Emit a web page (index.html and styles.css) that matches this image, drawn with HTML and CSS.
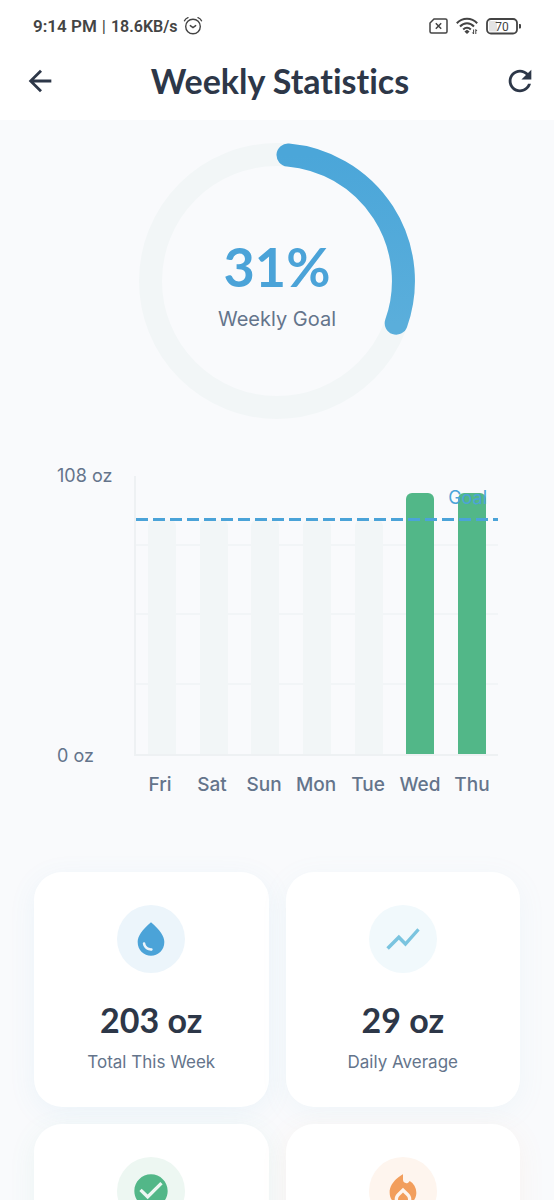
FILE: index.html
```html
<!DOCTYPE html>
<html lang="en">
<head>
<meta charset="utf-8">
<meta name="viewport" content="width=device-width, initial-scale=1">
<title>Weekly Statistics</title>
<link rel="stylesheet" href="styles.css">
</head>
<body>
<div class="app">
  <header class="top">
    <div class="status">
      <div class="status-left">
        <span class="time">9:14 PM</span><span class="divider">|</span><span class="speed">18.6KB/s</span>
        <svg class="alarm" width="20" height="20" viewBox="0 0 20 20" fill="none" stroke="#444" stroke-width="1.4" stroke-linecap="round"><circle cx="10" cy="10.500" r="7.300"/><path d="M1.500 4.800C2.200 3.200 3.400 2.200 5 1.600M18.500 4.800C17.800 3.200 16.600 2.200 15 1.600M7.300 9.600l2.700 2 2.700-2"/></svg>
      </div>
      <div class="status-right">
        <svg width="19" height="16" viewBox="0 0 19 16" fill="none" stroke="#444" stroke-width="1.500"><path d="M5 1h11.500q1.500 0 1.500 1.500v11q0 1.500-1.500 1.500H2.500Q1 15 1 13.500V5z"/><path d="M6.800 5.300l5.400 5.400M12.200 5.300l-5.400 5.400"/></svg>
        <svg width="22" height="18" viewBox="0 0 22 18" fill="none" stroke="#444" stroke-width="2"><path d="M.8 6.200C6.500.2 15.500.2 21.200 6.200M4 9.500c4-4.300 10-4.300 14 0M7.200 12.500c2.300-2.300 5.300-2.300 7.600 0"/><path d="M11 12.800l2.600 1.600-2.600 2.600-2.600-2.600z" fill="#444" stroke="none"/><path d="M17.600 12.500v4.500l-1.200-1.500M19.800 17v-4.500l1.200 1.500" stroke-width="1"/></svg>
        <svg width="36" height="17" viewBox="0 0 36 17"><rect x="3" y="3" width="8" height="10.500" fill="#e3e3e3"/><rect x="1" y="1" width="30" height="14.500" rx="4" fill="none" stroke="#444" stroke-width="1.800"/><path d="M33 6h1q1 0 1 1v2.500q0 1-1 1h-1z" fill="#444"/><text class="battery-text" x="16" y="12.500" text-anchor="middle">70</text></svg>
      </div>
    </div>
    <div class="appbar">
      <button class="icon-button" aria-label="Back"><svg viewBox="0 0 24 24"><path d="M20 11H7.830l5.590-5.590L12 4l-8 8 8 8 1.410-1.410L7.830 13H20v-2z"/></svg></button>
      <h1 class="title">Weekly Statistics</h1>
      <button class="icon-button" aria-label="Refresh"><svg viewBox="0 0 24 24"><path d="M17.650 6.350C16.200 4.900 14.210 4 12 4c-4.420 0-7.990 3.580-7.990 8s3.570 8 7.990 8c3.730 0 6.840-2.550 7.730-6h-2.080c-.82 2.330-3.040 4-5.650 4-3.310 0-6-2.690-6-6s2.690-6 6-6c1.660 0 3.140.69 4.220 1.780L13 11h7V4l-2.350 2.350z"/></svg></button>
    </div>
  </header>

  <main class="content">
    <section class="goal">
      <svg class="ring" viewBox="0 0 276 276" fill="none" stroke-width="23">
        <defs><linearGradient id="arc" x1="0" y1="0" x2="0" y2="1"><stop offset="0" stop-color="#4ba6d9"/><stop offset="1" stop-color="#5aaedb"/></linearGradient></defs>
        <circle cx="138" cy="138" r="126.500" stroke="#f2f6f7"/>
        <path d="M149 12A126.500 126.500 0 0 1 257.200 180.200" stroke="url(#arc)" stroke-linecap="round"/>
      </svg>
      <div class="goal-text">
        <strong class="percent">31%</strong>
        <span class="goal-label">Weekly Goal</span>
      </div>
    </section>

    <section class="chart">
      <div class="scale"><span>108 oz</span><span>0 oz</span></div>
      <div class="plot">
        <div class="grid-lines"><i></i><i></i><i></i><i></i></div>
        <div class="bars">
          <div class="bar"></div><div class="bar"></div><div class="bar"></div><div class="bar"></div><div class="bar"></div>
          <div class="bar met"></div><div class="bar met"></div>
        </div>
        <div class="goal-line"><span class="goal-tag">Goal</span></div>
      </div>
      <div class="days"><span>Fri</span><span>Sat</span><span>Sun</span><span>Mon</span><span>Tue</span><span>Wed</span><span>Thu</span></div>
    </section>

    <section class="cards">
      <article class="card blue">
        <div class="badge"><svg viewBox="0 0 24 24"><path d="M12 2c-5.330 4.550-8 8.480-8 11.800 0 4.980 3.800 8.200 8 8.200s8-3.220 8-8.200c0-3.320-2.670-7.250-8-11.800zM7.830 14c.37 0 .67.26.74.62.41 2.220 2.280 2.980 3.640 2.870.43-.02.79.32.79.75 0 .4-.32.73-.72.75-2.130.13-4.620-1.090-5.190-4.120-.08-.45.28-.87.74-.87z"/></svg></div>
        <strong class="value">203 oz</strong>
        <span class="label">Total This Week</span>
      </article>
      <article class="card cyan">
        <div class="badge"><svg viewBox="0 0 24 24"><path d="M3.500 18.490l6-6.010 4 4L22 6.920l-1.410-1.410-7.090 7.970-4-4L2 16.990z"/></svg></div>
        <strong class="value">29 oz</strong>
        <span class="label">Daily Average</span>
      </article>
      <article class="card green">
        <div class="badge"><svg viewBox="0 0 24 24"><path d="M12 2C6.480 2 2 6.480 2 12s4.480 10 10 10 10-4.480 10-10S17.520 2 12 2zm-2 15l-5-5 1.410-1.410L10 14.170l7.590-7.590L19 8l-9 9z"/></svg></div>
      </article>
      <article class="card orange">
        <div class="badge"><svg viewBox="0 0 24 24"><path d="M12 12.900l-2.130 2.090C9.310 15.550 9 16.280 9 17.060 9 18.680 10.350 20 12 20s3-1.320 3-2.940c0-.78-.31-1.520-.87-2.070L12 12.900z"/><path d="M16 6l-.44.55C14.380 8.020 12 7.190 12 5.300V2S4 6 4 13c0 2.920 1.560 5.470 3.890 6.860-.56-.79-.89-1.760-.89-2.800 0-1.320.52-2.560 1.470-3.500L12 10.100l3.530 3.470c.95.93 1.470 2.170 1.470 3.500 0 1.020-.31 1.960-.85 2.750 1.890-1.150 3.290-3.060 3.710-5.300.66-3.550-1.070-6.900-3.860-8.520z"/></svg></div>
      </article>
    </section>
  </main>
</div>
</body>
</html>
```
FILE: styles.css
```css
* { box-sizing: border-box; }

body {
  margin: 0;
  background: #f9fafc;
  color: #2d3748;
  font-family: "Inter", sans-serif;
}

.app {
  display: flex;
  flex-direction: column;
  height: 100vh;
}

.top { background: #fff; }

/* Status bar */
.status {
  display: flex;
  justify-content: space-between;
  align-items: center;
  height: 42px;
  padding: 10px 32px 0 33px;
  color: #444;
  font-family: Roboto, sans-serif;
  font-size: 17px;
  font-weight: 600;
}

.status-left, .status-right { display: flex; align-items: center; }
.status-left { gap: 5px; }
.status-right { gap: 8px; }
.speed { font-size: 16px; }
.divider { font-weight: 400; }
.battery-text { font-size: 12px; font-weight: 400; fill: #444; }

/* App bar */
.appbar {
  display: flex;
  justify-content: space-between;
  align-items: center;
  height: 78px;
  padding: 0 17px 0 23px;
}

.icon-button {
  width: 34px;
  height: 34px;
  padding: 0;
  border: 0;
  background: none;
}

.icon-button svg { display: block; fill: #2d3748; }

.title {
  margin: 0;
  font-family: Lato, sans-serif;
  font-size: 34px;
  font-weight: 700;
  font-variant-ligatures: none;
  line-height: 44px;
}

.content {
  flex: 1;
  min-height: 0;
  overflow-y: auto;
  scrollbar-width: none;
  padding: 23px 34px 34px;
}

/* Goal ring */
.goal { display: grid; place-items: center; }
.goal > * { grid-area: 1 / 1; }
.ring { width: 276px; height: 276px; }

.goal-text {
  display: flex;
  flex-direction: column;
  align-items: center;
  gap: 4px;
  padding-top: 4px;
}

.percent {
  color: #4ba3d8;
  font-family: Lato, sans-serif;
  font-size: 54px;
  font-weight: 700;
  line-height: 68px;
}

.goal-label {
  color: #64748b;
  font-size: 20px;
  line-height: 28px;
}

/* Bar chart */
.chart {
  display: grid;
  grid-template-columns: 77px 1fr;
  grid-template-rows: 280px auto;
  row-gap: 15px;
  margin-top: 57px;
  padding: 0 22px 0 23px;
  color: #64748b;
}

.scale {
  display: flex;
  flex-direction: column;
  justify-content: space-between;
  margin: -13px 0;
  font-size: 18px;
  line-height: 26px;
}

.plot {
  display: grid;
  border-left: 2px solid #eef1f3;
  border-bottom: 2px solid #eef1f3;
}

.plot > * { grid-area: 1 / 1; }

.grid-lines { display: grid; grid-template-rows: repeat(4, 1fr); }
.grid-lines i { border-bottom: 2px solid #f2f5f7; }
.grid-lines i:last-child { border: 0; }

.bars {
  display: grid;
  grid-template-columns: repeat(7, 1fr);
  justify-items: center;
  align-items: end;
}

.bar {
  width: 28px;
  height: 84%;
  border-radius: 6px 6px 0 0;
  background: #f2f6f7;
}

.bar.met { height: 94%; background: #52b788; }

.goal-line {
  display: flex;
  flex-direction: column;
  align-items: flex-end;
  height: 45px;
  padding: 9px 11px 0 0;
  background: repeating-linear-gradient(90deg, #4ba3d8 0 12px, transparent 12px 17px) bottom / 100% 3px no-repeat;
}

.goal-tag {
  color: #4ba3d8;
  font-size: 18px;
  line-height: 26px;
}

.days {
  grid-column: 2;
  display: grid;
  grid-template-columns: repeat(7, 1fr);
  font-size: 19px;
  font-weight: 500;
  line-height: 28px;
  text-align: center;
}

/* Summary cards */
.cards {
  display: grid;
  grid-template-columns: 1fr 1fr;
  gap: 17px;
  margin-top: 73px;
}

.card {
  display: flex;
  flex-direction: column;
  align-items: center;
  min-height: 235px;
  padding: 33px 16px 16px;
  border-radius: 28px;
  background: #fff;
  box-shadow: 0 6px 28px var(--shadow);
}

.badge {
  display: grid;
  place-items: center;
  width: 68px;
  height: 68px;
  border-radius: 50%;
  background: var(--tint);
}

.badge svg { width: 40px; height: 40px; fill: var(--accent); }

.blue { --accent: #4ba3d8; --tint: #ecf5fb; --shadow: #4ba3d814; }
.cyan { --accent: #7ac4df; --tint: #f1f9fc; --shadow: #7ac4df14; }
.green { --accent: #52b788; --tint: #edf7f2; --shadow: #52b78814; }
.orange { --accent: #f29e5c; --tint: #fef5ee; --shadow: #f29e5c14; }

.value {
  margin-top: 25px;
  font-family: Lato, sans-serif;
  font-size: 34px;
  font-weight: 700;
  line-height: 44px;
}

.label {
  margin-top: 6px;
  color: #64748b;
  font-size: 17px;
  line-height: 28px;
}
```
